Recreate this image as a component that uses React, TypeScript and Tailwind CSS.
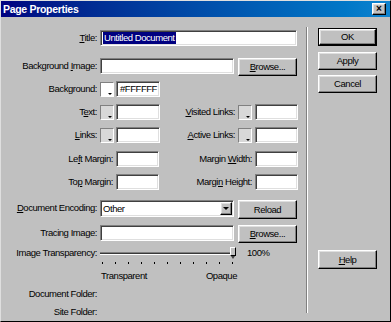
import React from "react";

const sunken =
  "bg-white border border-t-[#808080] border-l-[#808080] border-b-white border-r-white shadow-[inset_1px_1px_0_#404040,inset_-1px_-1px_0_#dfdfdf]";
const raised =
  "flex items-center justify-center bg-[#c0c0c0] border border-t-white border-l-white border-b-black border-r-black shadow-[inset_-1px_-1px_0_#808080,inset_1px_1px_0_#dfdfdf]";

function Btn({ className, children }: { className: string; children: React.ReactNode }) {
  return <div className={`${raised} ${className}`}>{children}</div>;
}

function Swatch({ white }: { white?: boolean }) {
  return (
    <div
      className={`relative w-[14px] h-[15px] mt-[1px] border border-t-[#808080] border-l-[#808080] border-b-white border-r-white ${
        white ? "bg-white" : "bg-[#d8d8d8]"
      }`}
    >
      <div className="absolute right-[1px] bottom-[1px] w-0 h-0 border-l-[2px] border-r-[2px] border-t-[2px] border-l-transparent border-r-transparent border-t-black" />
    </div>
  );
}

export default function App() {
  return (
    <div className="w-[391px] h-[322px] bg-[#c0c0c0] border border-t-[#dfdfdf] border-l-[#dfdfdf] border-b-black border-r-black font-['Liberation_Sans',Arial,sans-serif] text-[9.5px] tracking-[-0.45px] text-black leading-none overflow-hidden">
      {/* Title bar */}
      <div className="h-[16px] flex items-center justify-between bg-gradient-to-r from-[#000080] to-[#1084d0]">
        <span className="pl-[2px] text-white font-bold text-[10.5px] tracking-[-0.3px]">Page Properties</span>
        <Btn className="w-[14px] h-[12px] mr-[4px] text-[10px] font-bold tracking-normal">
          <span className="-mt-[1px]">×</span>
        </Btn>
      </div>

      <div className="flex">
        {/* Left form */}
        <div className="w-[305px] flex flex-col">
          {/* Title */}
          <div className="flex items-center h-[16px] mt-[13px]">
            <span className="w-[96px] text-right">
              <u>T</u>itle:
            </span>
            <div className={`${sunken} ml-[3px] w-[197px] h-[16px] flex items-center pl-[2px]`}>
              <span className="bg-[#000080] text-white px-[1px] py-[1px]">Untitled Document</span>
            </div>
          </div>

          {/* Background Image */}
          <div className="flex items-start h-[16px] mt-[12px]">
            <span className="w-[96px] text-right self-center">
              Background <u>I</u>mage:
            </span>
            <div className={`${sunken} ml-[3px] w-[134px] h-[16px]`} />
            <Btn className="ml-[4px] w-[59px] h-[18px]">
              <span>
                <u>B</u>rowse...
              </span>
            </Btn>
          </div>

          {/* Background */}
          <div className="flex items-center h-[16px] mt-[7px]">
            <span className="w-[96px] text-right">Background:</span>
            <div className="ml-[3px]">
              <Swatch white />
            </div>
            <div className={`${sunken} ml-[2px] w-[44px] h-[16px] flex items-center pl-[3px]`}>#FFFFFF</div>
          </div>

          {/* Text / Visited */}
          <div className="flex items-center h-[16px] mt-[7px]">
            <span className="w-[96px] text-right">
              T<u>e</u>xt:
            </span>
            <div className="ml-[3px]">
              <Swatch />
            </div>
            <div className={`${sunken} ml-[2px] w-[44px] h-[16px]`} />
            <span className="w-[75px] text-right">
              <u>V</u>isited Links:
            </span>
            <div className="ml-[3px]">
              <Swatch />
            </div>
            <div className={`${sunken} ml-[3px] w-[43px] h-[16px]`} />
          </div>

          {/* Links / Active */}
          <div className="flex items-center h-[16px] mt-[7px]">
            <span className="w-[96px] text-right">
              <u>L</u>inks:
            </span>
            <div className="ml-[3px]">
              <Swatch />
            </div>
            <div className={`${sunken} ml-[2px] w-[44px] h-[16px]`} />
            <span className="w-[75px] text-right">
              <u>A</u>ctive Links:
            </span>
            <div className="ml-[3px]">
              <Swatch />
            </div>
            <div className={`${sunken} ml-[3px] w-[43px] h-[16px]`} />
          </div>

          {/* Left Margin / Margin Width */}
          <div className="flex items-center h-[16px] mt-[8px]">
            <span className="w-[112px] text-right">
              Le<u>f</u>t Margin:
            </span>
            <div className={`${sunken} ml-[3px] w-[43px] h-[16px]`} />
            <span className="w-[93px] text-right">
              Margin <u>W</u>idth:
            </span>
            <div className={`${sunken} ml-[3px] w-[43px] h-[16px]`} />
          </div>

          {/* Top Margin / Margin Height */}
          <div className="flex items-center h-[16px] mt-[7px]">
            <span className="w-[112px] text-right">
              To<u>p</u> Margin:
            </span>
            <div className={`${sunken} ml-[3px] w-[43px] h-[16px]`} />
            <span className="w-[93px] text-right">
              Margi<u>n</u> Height:
            </span>
            <div className={`${sunken} ml-[3px] w-[43px] h-[16px]`} />
          </div>

          {/* Document Encoding */}
          <div className="flex items-start h-[16px] mt-[10px]">
            <span className="w-[96px] text-right self-center">
              <u>D</u>ocument Encoding:
            </span>
            <div className={`${sunken} ml-[3px] w-[134px] h-[17px] flex items-center justify-between pl-[2px] pr-[1px]`}>
              <span>Other</span>
              <Btn className="w-[12px] h-[13px]">
                <div className="w-0 h-0 border-l-[3px] border-r-[3px] border-t-[3px] border-l-transparent border-r-transparent border-t-black" />
              </Btn>
            </div>
            <Btn className="ml-[4px] w-[59px] h-[19px]">Reload</Btn>
          </div>

          {/* Tracing Image */}
          <div className="flex items-start h-[16px] mt-[9px]">
            <span className="w-[96px] text-right self-center">Tracing Image:</span>
            <div className={`${sunken} ml-[3px] w-[134px] h-[16px]`} />
            <Btn className="ml-[4px] w-[59px] h-[18px]">
              <span>
                <u>B</u>rowse...
              </span>
            </Btn>
          </div>

          {/* Image Transparency */}
          <div className="flex items-center h-[12px] mt-[6px]">
            <span className="w-[96px] text-right">Image Transparency:</span>
            <div className="relative ml-[3px] w-[136px] h-[12px] flex items-center">
              <div className="w-[133px] h-[3px] border-t border-t-[#808080] border-b border-b-white bg-black/70" />
              <div className="absolute right-0 top-0 w-[6px] h-[9px] bg-[#c0c0c0] border border-t-white border-l-white border-b-black border-r-black" />
              <div className="absolute right-[1px] top-[9px] w-0 h-0 border-l-[2px] border-r-[2px] border-t-[3px] border-l-transparent border-r-transparent border-t-[#404040]" />
            </div>
            <span className="ml-[11px]">100%</span>
          </div>

          {/* Ticks */}
          <div className="flex h-[2px] mt-[3px] ml-[101px] w-[131px] justify-between">
            {[0, 1, 2, 3, 4, 5, 6, 7, 8, 9, 10].map((i) => (
              <div key={i} className="w-[1px] h-[2px] bg-black" />
            ))}
          </div>

          {/* Transparent / Opaque */}
          <div className="flex justify-between h-[10px] mt-[7px] ml-[100px] w-[136px] items-center">
            <span>Transparent</span>
            <span>Opaque</span>
          </div>

          {/* Document Folder */}
          <div className="flex items-center h-[12px] mt-[7px]">
            <span className="w-[96px] text-right">Document Folder:</span>
          </div>

          {/* Site Folder */}
          <div className="flex items-center h-[12px] mt-[6px]">
            <span className="w-[96px] text-right">Site Folder:</span>
          </div>
        </div>

        {/* Separator */}
        <div className="mt-[10px] h-[286px] w-[2px] border-l border-l-[#808080] border-r border-r-white" />

        {/* Buttons */}
        <div className="flex flex-col ml-[10px]">
          <div className="mt-[11px] w-[59px] h-[18px] border border-black">
            <Btn className="w-full h-full">OK</Btn>
          </div>
          <Btn className="mt-[6px] w-[59px] h-[18px]">Apply</Btn>
          <Btn className="mt-[5px] w-[59px] h-[18px]">Cancel</Btn>
          <Btn className="mt-[157px] w-[59px] h-[19px]">
            <span>
              <u>H</u>elp
            </span>
          </Btn>
        </div>
      </div>
    </div>
  );
}
